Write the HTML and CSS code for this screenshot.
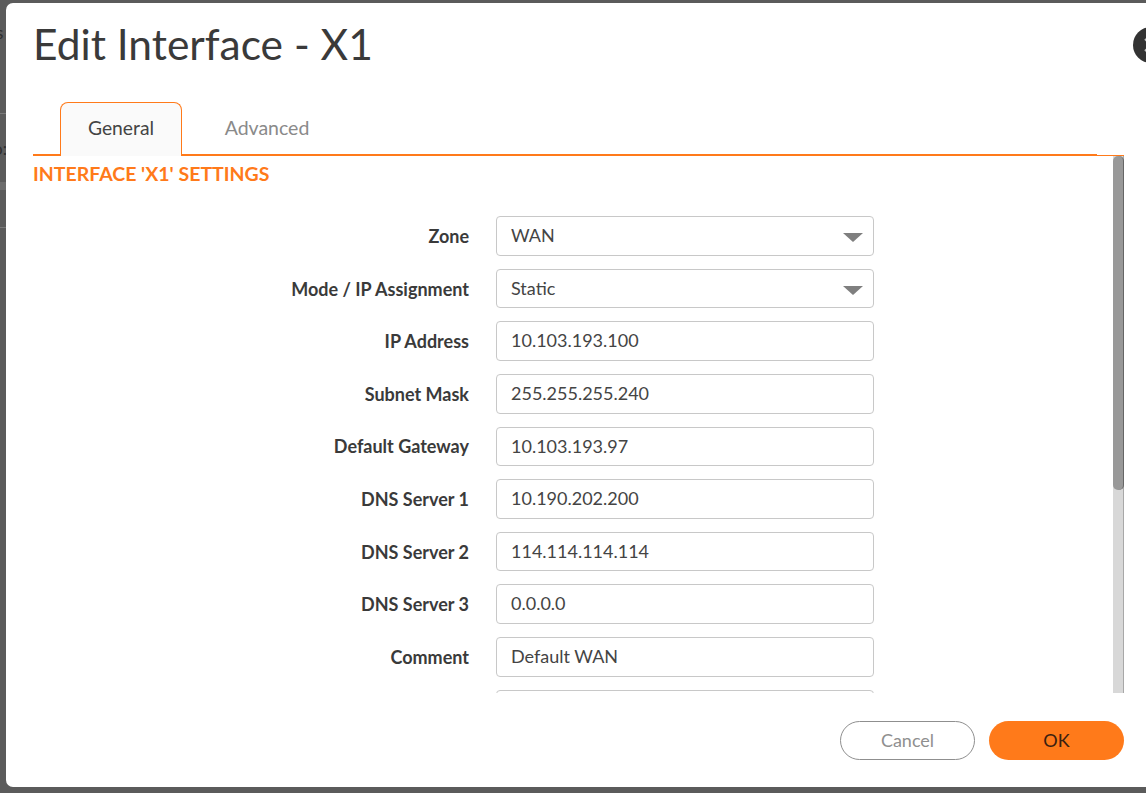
FILE: index.html
```html
<!DOCTYPE html>
<html lang="en">
<head>
<meta charset="utf-8">
<title>Edit Interface - X1</title>
<link rel="stylesheet" href="styles.css">
</head>
<body>
<div class="backdrop">
  <span class="bg-s">s</span>
  <span class="bg-line bg-line-1"></span>
  <span class="bg-o">o:</span>
  <span class="bg-band"></span>
  <span class="bg-line bg-line-2"></span>
</div>
<div class="modal">
  <h1 class="title">Edit Interface - X1</h1>
  <button class="close" aria-label="Close"><svg width="36" height="36" viewBox="0 0 36 36"><path d="M12 12l12 12M24 12L12 24" stroke="#c4c4c4" stroke-width="2" fill="none"/></svg></button>
  <div class="tabs">
    <div class="tab tab-active">General</div>
    <div class="tab tab-plain">Advanced</div>
  </div>
  <div class="body">
    <div class="pane">
      <h2 class="section">INTERFACE 'X1' SETTINGS</h2>
      <div class="form">
        <div class="row"><label class="label">Zone</label><div class="field">WAN<span class="caret"></span></div></div>
        <div class="row"><label class="label">Mode / IP Assignment</label><div class="field">Static<span class="caret"></span></div></div>
        <div class="row"><label class="label">IP Address</label><div class="field">10.103.193.100</div></div>
        <div class="row"><label class="label">Subnet Mask</label><div class="field">255.255.255.240</div></div>
        <div class="row"><label class="label">Default Gateway</label><div class="field">10.103.193.97</div></div>
        <div class="row"><label class="label">DNS Server 1</label><div class="field">10.190.202.200</div></div>
        <div class="row"><label class="label">DNS Server 2</label><div class="field">114.114.114.114</div></div>
        <div class="row"><label class="label">DNS Server 3</label><div class="field">0.0.0.0</div></div>
        <div class="row"><label class="label">Comment</label><div class="field">Default WAN</div></div>
        <div class="row"><label class="label"></label><div class="field"></div></div>
      </div>
    </div>
    <div class="scrollbar"><div class="thumb"></div></div>
  </div>
  <div class="footer">
    <button class="btn btn-cancel">Cancel</button>
    <button class="btn btn-ok">OK</button>
  </div>
</div>
</body>
</html>
```
FILE: styles.css
```css
* { box-sizing: border-box; }
html, body { margin: 0; height: 100%; overflow: hidden; }
body {
  background: #5b5b5b;
  font-family: "Lato", "Liberation Sans", sans-serif;
  color: #333;
  position: relative;
}
.backdrop { position: absolute; left: 0; top: 0; width: 6px; height: 100%; overflow: hidden; }
.bg-s, .bg-o { position: absolute; font-size: 17px; color: #2e2e2e; line-height: 18px; }
.bg-s { top: 24px; left: -4px; }
.bg-o { top: 140px; left: -7px; }
.bg-line { position: absolute; left: 0; width: 6px; height: 1px; background: #7a7a7a; }
.bg-line-1 { top: 113px; }
.bg-line-2 { top: 227px; }
.bg-band { position: absolute; left: 0; top: 182px; width: 6px; height: 8px; background: #6c6c6c; }
.modal {
  position: absolute;
  left: 6px;
  top: 3px;
  width: 1170px;
  height: 784px;
  background: #fff;
  border-radius: 7px;
  display: flex;
  flex-direction: column;
  padding-left: 27px;
}
.title { margin: 0; height: 99px; padding: 13px 0 0; font-size: 42.5px; line-height: 56px; font-weight: 400; color: #3a3a3a; }
.close {
  position: absolute; left: 1127px; top: 24px; width: 36px; height: 36px; padding: 0;
  border: 0; border-radius: 50%; background: #333; line-height: 0;
}
.tabs {
  display: flex; width: 1091px; height: 54px; padding-left: 27px;
  background: linear-gradient(#ff7a1a, #ff7a1a) left bottom / 1064px 2px no-repeat, linear-gradient(#ff7a1a, #ff7a1a) left bottom / 1091px 1px no-repeat;
}
.tab { width: 122px; font-size: 19.3px; line-height: 50px; text-align: center; color: #8a8a8a; margin-right: 24px; }
.tab-plain { padding-top: 1px; font-size: 19.5px; }
.tab-active {
  color: #444; background: #fafafa;
  border: 1px solid #ff7a1a; border-bottom: 0; border-radius: 8px 8px 0 0;
}
.body { display: flex; height: 537px; width: 1091px; }
.pane { width: 1080px; overflow: hidden; }
.section { margin: 0; height: 60.3px; padding-top: 5px; font-size: 19.5px; line-height: 26px; font-weight: 700; color: #ff7a1a; }
.form { display: flex; flex-direction: column; gap: 13px; }
.row { display: flex; align-items: center; height: 39.6px; flex: none; }
.label { width: 436px; text-align: right; font-size: 18px; font-weight: 700; color: #3a3a3a; }
.field {
  position: relative; margin-left: 27px; width: 378px; height: 39.6px; flex: none;
  border: 1px solid #c8c8c8; border-radius: 4px; padding-left: 14px;
  font-size: 18px; line-height: 37.6px; color: #444;
}
.caret {
  position: absolute; right: 10px; top: 16px; width: 0; height: 0;
  border-left: 10px solid transparent; border-right: 10px solid transparent; border-top: 9px solid #7f7f7f;
}
.scrollbar { width: 11px; background: #d8d8d8; border-right: 1px solid #a8a8a8; }
.thumb { height: 334px; background: #999; border-radius: 5px; border-right: 1px solid #666; margin-right: -1px; }
.footer { display: flex; gap: 14px; padding: 28px 0 0 807px; }
.btn { width: 135px; height: 39px; border-radius: 20px; font-size: 18px; font-family: "Lato", sans-serif; padding: 0 0 2px; }
.btn-cancel { background: #fff; border: 1px solid #8f8f8f; color: #8f8f8f; }
.btn-ok { background: #ff7a1a; border: 0; color: #3a2010; }
```
